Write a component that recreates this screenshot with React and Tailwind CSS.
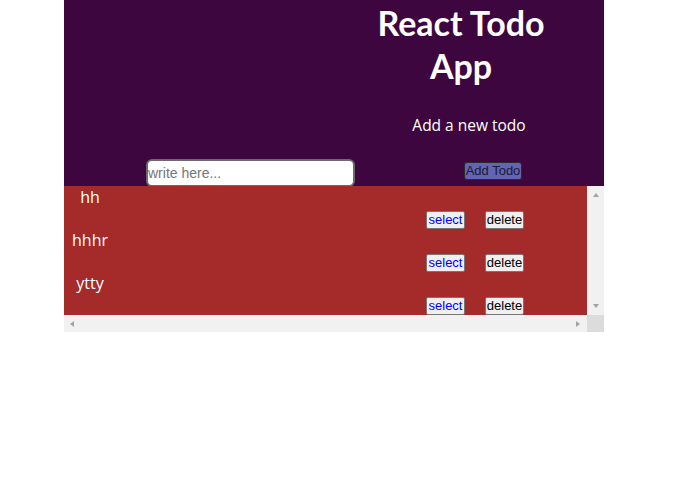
import React from 'react';

const todos = ['hh', 'hhhr', 'ytty'];

function TodoRow({ text }) {
  return (
    <div className="h-[43px] w-[523px] shrink-0 flex flex-col">
      <div className="w-[52px] h-[22px] text-center text-white text-[16px] leading-[22px]">{text}</div>
      <div className="flex mt-[3px] ml-[362px] gap-[20px]">
        <button className="w-[39px] h-[18px] bg-[#efefef] border border-[#767676] rounded-[2px] text-[13px] leading-[14px] text-[#0000ff] font-['Liberation_Sans',Arial,sans-serif]">
          select
        </button>
        <button className="w-[39px] h-[18px] bg-[#efefef] border border-[#767676] rounded-[2px] text-[13px] leading-[14px] text-black font-['Liberation_Sans',Arial,sans-serif]">
          delete
        </button>
      </div>
    </div>
  );
}

function Arrow({ dir }) {
  const pts = {
    up: '1,5 4,1 7,5',
    down: '1,1 4,5 7,1',
    left: '5,1 1,4 5,7',
    right: '1,1 5,4 1,7',
  }[dir];
  const size = dir === 'up' || dir === 'down' ? { w: 8, h: 6 } : { w: 6, h: 8 };
  return (
    <svg width={size.w} height={size.h} viewBox={`0 0 ${size.w} ${size.h}`}>
      <polygon points={pts} fill="#a3a3a3" />
    </svg>
  );
}

export default function App() {
  return (
    <div className="w-[540px] ml-[64px] font-['Open_Sans',sans-serif]">
      <header className="bg-[#3e063e] h-[186px] flex flex-col">
        <h1 className="ml-[294px] w-[206px] text-center text-white text-[34px] font-bold leading-[43px] mt-[1px] font-['Lato',sans-serif]">
          React Todo App
        </h1>
        <p className="ml-[296px] w-[218px] text-center text-white text-[15.5px] mt-[27px]">Add a new todo</p>
        <div className="flex items-end mt-auto">
          <input
            placeholder="write here..."
            className="ml-[82px] w-[209px] h-[28px] mb-[-1px] bg-white rounded-[6px] border-2 border-[#6b6b6b] px-0 text-[14px] placeholder:text-[#757575] font-['Liberation_Sans',Arial,sans-serif]"
          />
          <button className="ml-[109px] mb-[6px] w-[58px] h-[18px] bg-[#6464b4] border border-[#2a2a2a] rounded-[3px] text-[13px] leading-[14px] text-[#1a1a2e] font-['Liberation_Sans',Arial,sans-serif]">
            Add Todo
          </button>
        </div>
      </header>
      <div className="flex flex-col">
        <div className="flex h-[129px]">
          <div className="w-[523px] overflow-hidden bg-[#a52a2a] flex flex-col">
            {todos.map((t) => (
              <TodoRow key={t} text={t} />
            ))}
          </div>
          <div className="w-[17px] bg-[#f1f1f1] flex flex-col items-center justify-between pt-[6px] pb-[6px]">
            <Arrow dir="up" />
            <Arrow dir="down" />
          </div>
        </div>
        <div className="flex h-[17px]">
          <div className="w-[523px] bg-[#f1f1f1] flex items-center justify-between pl-[5px] pr-[6px]">
            <Arrow dir="left" />
            <Arrow dir="right" />
          </div>
          <div className="w-[17px] bg-[#dcdcdc]" />
        </div>
      </div>
    </div>
  );
}
